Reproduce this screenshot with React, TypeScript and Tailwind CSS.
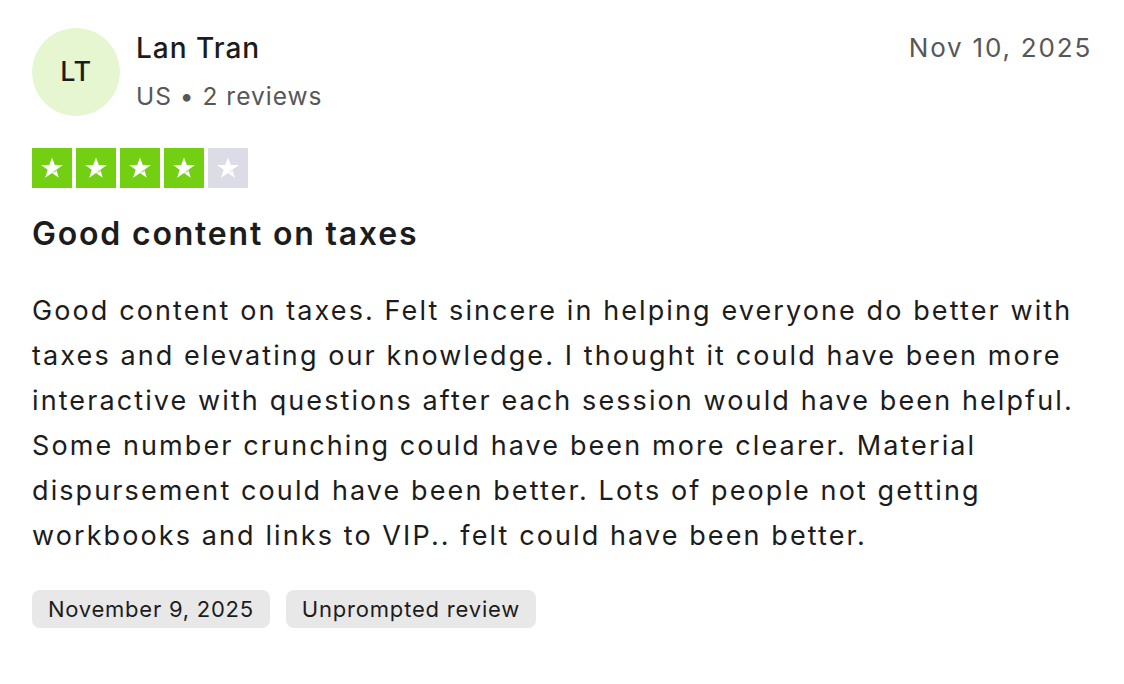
import React from 'react';

const FONT = { fontFamily: 'Inter, "Noto Sans", Arial, sans-serif' };

function Star({ filled }: { filled: boolean }) {
  return (
    <div className={`w-10 h-10 flex items-center justify-center ${filled ? 'bg-[#73cf11]' : 'bg-[#dcdce6]'}`}>
      <svg viewBox="0 0 24 24" className="w-[26px] h-[26px]">
        <path
          d="M12 2.2l2.6 7.1h7.5l-6.1 4.4 2.3 7.2L12 16.5l-6.3 4.4 2.3-7.2-6.1-4.4h7.5z"
          fill="#ffffff"
        />
        <path d="M15.7 13.2l0.6 2.2L12 16.5z" fill={filled ? '#73cf11' : '#dcdce6'} opacity="0.55" />
      </svg>
    </div>
  );
}

export default function App() {
  const rating = 4;

  return (
    <div className="w-[1124px] h-[684px] bg-white text-[#1c1c1c]" style={FONT}>
      <div className="pl-8 pr-[34px] pt-7">
        {/* HEADER */}
        <div className="flex items-start justify-between">
          <div className="flex items-start gap-4">
            <div className="w-[88px] h-[88px] rounded-full bg-[#e5f6d0] flex items-center justify-center text-[27px] font-medium tracking-[0.5px]">
              LT
            </div>
            <div className="flex flex-col">
              <span className="text-[28px] font-medium leading-[40px] tracking-[1px]">Lan Tran</span>
              <span className="text-[24.5px] text-[#575757] leading-[56px] tracking-[1px]">US • 2 reviews</span>
            </div>
          </div>
          <span className="text-[26px] text-[#575757] leading-[40px] tracking-[1.8px] -mr-[2px]">Nov 10, 2025</span>
        </div>

        {/* STARS */}
        <div className="flex gap-1 mt-6">
          {[1, 2, 3, 4, 5].map(i => (
            <Star key={i} filled={i <= rating} />
          ))}
        </div>

        {/* TITLE */}
        <h2 className="text-[32px] font-semibold mt-[26px] leading-[40px] tracking-[1.8px]">Good content on taxes</h2>

        {/* BODY */}
        <p className="text-[27px] leading-[45px] mt-[34px] max-w-[1060px] tracking-[2.1px]">
          Good content on taxes. Felt sincere in helping everyone do better with taxes and elevating our knowledge. I thought it could have been more interactive with questions after each session would have been helpful. Some number crunching could have been more clearer. Material dispursement could have been better. Lots of people not getting workbooks and links to VIP.. felt could have been better.
        </p>

        {/* TAGS */}
        <div className="flex gap-4 mt-[32px]">
          <span className="h-[38px] px-4 rounded-lg bg-[#e8e8e8] text-[22px] tracking-[0.75px] flex items-center">November 9, 2025</span>
          <span className="h-[38px] px-4 rounded-lg bg-[#e8e8e8] text-[22px] tracking-[0.8px] flex items-center">Unprompted review</span>
        </div>
      </div>
    </div>
  );
}
